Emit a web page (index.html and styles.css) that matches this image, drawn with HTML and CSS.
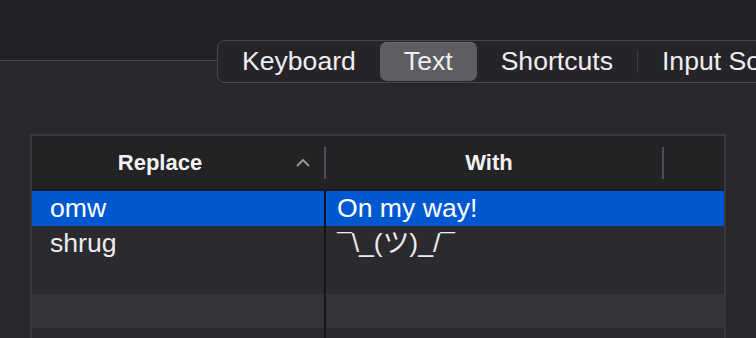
FILE: index.html
```html
<!DOCTYPE html>
<html lang="en">
<head>
    <meta charset="UTF-8">
    <title>Keyboard – Text</title>
    <link rel="stylesheet" href="styles.css">
</head>
<body>
<div class="prefs-window">
    <!-- tab strip -->
    <div class="tab-row">
        <div class="segmented">
            <div class="seg-item">Keyboard</div>
            <div class="seg-item selected">Text</div>
            <div class="seg-item">Shortcuts</div>
            <span class="seg-divider"></span>
            <div class="seg-item">Input Sources</div>
        </div>
    </div>

    <!-- replacement table -->
    <div class="replace-table">
        <div class="table-head">
            <div class="head-cell sortable">
                <span class="head-label">Replace</span>
                <svg class="sort-arrow" width="14" height="9" viewBox="0 0 14 9">
                    <path d="M1.5 7.5 L7 2 L12.5 7.5" fill="none" stroke="#98979b" stroke-width="1.8" stroke-linecap="round" stroke-linejoin="round"/>
                </svg>
            </div>
            <span class="head-sep"></span>
            <div class="head-cell with-cell">
                <span class="head-label">With</span>
            </div>
            <span class="head-sep"></span>
            <div class="head-cell"></div>
        </div>

        <div class="table-row selected">
            <div class="cell key-cell">omw</div>
            <div class="cell val-cell">On my way!</div>
        </div>
        <div class="table-row">
            <div class="cell key-cell">shrug</div>
            <div class="cell val-cell">¯\_(ツ)_/¯</div>
        </div>
        <div class="table-row"><div class="cell key-cell"></div><div class="cell val-cell"></div></div>
        <div class="table-row alt"><div class="cell key-cell"></div><div class="cell val-cell"></div></div>
        <div class="table-row"><div class="cell key-cell"></div><div class="cell val-cell"></div></div>
    </div>
</div>
</body>
</html>
```

FILE: styles.css
```css
/* window base */
body {
    margin: 0;
    background: #29272c;
    color: #ececee;
    font-family: 'Liberation Sans', 'Noto Sans CJK JP', sans-serif;
    overflow: hidden;
    height: 338px;
}

.prefs-window {
    width: 756px;
    height: 338px;
    overflow: hidden;
}

/* tab strip sits across the toolbar line */
.tab-row {
    padding: 40px 0 0 217px;
    background: linear-gradient(#232126 0, #232126 60px, #49474c 60px, #49474c 61px, #29272c 61px);
}

.segmented {
    display: flex;
    align-items: center;
    width: max-content;
    height: 41px;
    border: 1px solid #4a484d;
    border-radius: 8px;
    background: #262429;
    white-space: nowrap;
}

.seg-item {
    padding: 0 24px;
    height: 39px;
    line-height: 39px;
    font-size: 26.6px;
    color: #eeeef0;
}

.seg-item.selected {
    background: #5e5d61;
    border-radius: 7px;
    box-shadow: inset 0 1px 0 #6b6a6e;
}

.seg-divider {
    width: 1px;
    height: 23px;
    background: #3e3c41;
}

/* table */
.replace-table {
    margin: 51px 0 0 30px;
    width: 692px;
    border: 2px solid #3a393d;
    border-bottom: none;
}

.table-head {
    display: grid;
    grid-template-columns: 292px 2px 336px 2px 1fr;
    align-items: center;
    height: 53px;
    background: #232325;
    border-bottom: 2px solid #1d1c1e;
}

.head-cell {
    display: flex;
    align-items: center;
    font-size: 22px;
    font-weight: bold;
    color: #f2f2f3;
}

.head-label {
    flex: 1;
    text-align: center;
}

.sortable .head-label {
    padding-right: 8px;
}

.sort-arrow {
    margin-right: 14px;
}

.with-cell .head-label {
    padding-right: 10px;
}

.head-sep {
    height: 32px;
    background: #4f4e52;
}

.table-row {
    display: grid;
    grid-template-columns: 294px 1fr;
    height: 34px;
    background: #2b2a2e;
}

.table-row.selected {
    height: 35px;
    background: #0058d0;
}

.table-row.alt {
    background: #353438;
}

.cell {
    font-size: 26.6px;
    line-height: 34px;
    color: #ececee;
    white-space: nowrap;
}

.selected .cell {
    line-height: 35px;
    color: #ffffff;
}

.key-cell {
    padding-left: 18px;
    border-right: 2px solid #141316;
}

.val-cell {
    padding-left: 11px;
}
```
